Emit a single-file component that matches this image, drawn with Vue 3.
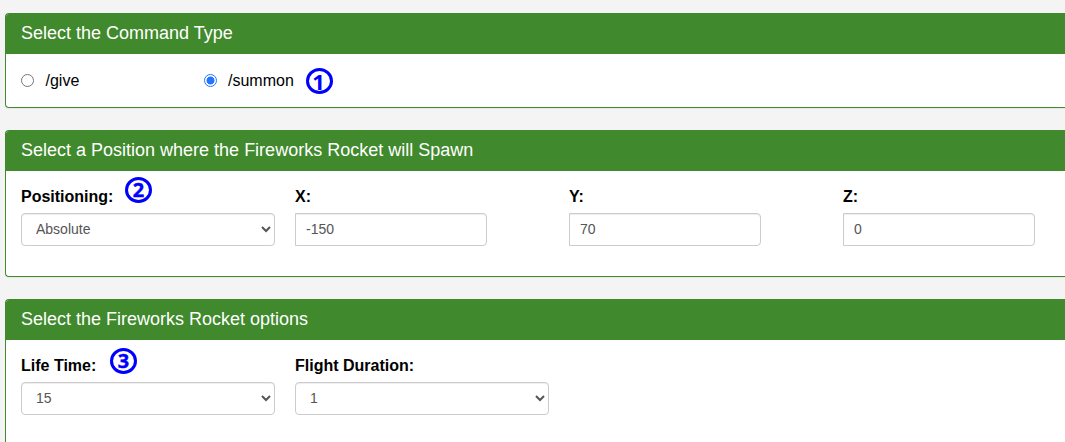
<template>
  <div class="page">
    <section class="panel">
      <h3 class="panel-heading">Select the Command Type</h3>
      <div class="panel-body command-body">
        <label v-for="type in commandTypes" :key="type" class="radio-option">
          <input v-model="command" type="radio" name="command" :value="type" />
          <span>{{ type }}</span>
          <StepBadge v-if="type === '/summon'" class="badge-command" :step="1" />
        </label>
      </div>
    </section>

    <section class="panel">
      <h3 class="panel-heading">Select a Position where the Fireworks Rocket will Spawn</h3>
      <div class="panel-body position-body">
        <div class="field">
          <label for="positioning">Positioning:</label>
          <StepBadge class="badge-position" :step="2" />
          <select id="positioning" v-model="positioning" class="form-control">
            <option>Absolute</option>
            <option>Relative</option>
          </select>
        </div>
        <div v-for="axis in axes" :key="axis.name" class="field">
          <label :for="axis.name">{{ axis.name }}:</label>
          <input :id="axis.name" v-model="axis.value" type="text" class="form-control coordinate" />
        </div>
      </div>
    </section>

    <section class="panel">
      <h3 class="panel-heading">Select the Fireworks Rocket options</h3>
      <div class="panel-body options-body">
        <div class="field">
          <label for="lifetime">Life Time:</label>
          <StepBadge class="badge-lifetime" :step="3" />
          <select id="lifetime" v-model="lifeTime" class="form-control">
            <option v-for="n in 30" :key="n" :value="n">{{ n }}</option>
          </select>
        </div>
        <div class="field">
          <label for="flight">Flight Duration:</label>
          <select id="flight" v-model="flight" class="form-control">
            <option v-for="n in 3" :key="n" :value="n">{{ n }}</option>
          </select>
        </div>
      </div>
    </section>
  </div>
</template>

<script setup>
import { h, reactive, ref } from 'vue'

const StepBadge = (props) => h('span', { class: ['step-badge', `step-${props.step}`] }, props.step)
StepBadge.props = ['step']

const commandTypes = ['/give', '/summon']
const command = ref('/summon')
const positioning = ref('Absolute')
const axes = reactive([
  { name: 'X', value: '-150' },
  { name: 'Y', value: '70' },
  { name: 'Z', value: '0' }
])
const lifeTime = ref(15)
const flight = ref(1)
</script>

<style>
body {
  margin: 0;
  background: #f4f4f4;
}

.step-badge {
  position: absolute;
  box-sizing: border-box;
  width: 27px;
  height: 26px;
  border: 3px solid #00f;
  border-radius: 50%;
  color: #00f;
  font: bold 20px/20px "Noto Sans", sans-serif;
  text-align: center;
  -webkit-text-stroke: 0.4px #00f;
}

.step-badge.step-1 {
  font-size: 22px;
  text-indent: -2px;
  -webkit-text-stroke: 0;
}
</style>

<style scoped>
.page {
  box-sizing: border-box;
  height: 442px;
  padding: 13px 0 0 5px;
  overflow: hidden;
  font-family: "Liberation Sans", Arial, sans-serif;
  font-size: 16px;
  line-height: 24px;
  color: #000;
}

.panel {
  box-sizing: border-box;
  margin-bottom: 22px;
  background: #fff;
  border: 1px solid #40892d;
  border-right: 0;
  border-radius: 4px 0 0 4px;
  box-shadow: 0 1px 1px rgba(0, 0, 0, 0.05);
}

.panel-heading {
  box-sizing: border-box;
  height: 40px;
  margin: 0;
  padding: 9px 15px;
  background: #40892d;
  border-radius: 3px 0 0 0;
  color: #fff;
  font-size: 18px;
  font-weight: normal;
  line-height: 20px;
}

.panel-body {
  box-sizing: border-box;
  display: flex;
  padding: 14px 0 15px 15px;
}

.command-body {
  height: 53px;
}

.position-body {
  height: 105px;
}

.options-body {
  height: 120px;
}

.radio-option {
  position: relative;
  display: flex;
  align-items: center;
  width: 183px;
  height: 25px;
}

.radio-option input {
  appearance: none;
  box-sizing: border-box;
  width: 13px;
  height: 13px;
  margin: 0 11.5px 0 0;
  border: 1px solid #767676;
  border-radius: 50%;
  background: #fff;
}

.radio-option input:checked {
  border-color: #2374ff;
  background: radial-gradient(circle, #2374ff 3.7px, #fff 4.3px);
}

.radio-option + .radio-option input {
  margin-right: 11px;
}

.field {
  position: relative;
  flex: 0 0 254px;
  margin-right: 20px;
}

.field:nth-child(4) {
  flex-basis: 192px;
  margin-right: 0;
}

.field label {
  display: block;
  height: 28px;
  line-height: 23px;
  font-weight: bold;
}

.form-control {
  box-sizing: border-box;
  display: block;
  width: 254px;
  height: 33px;
  padding: 6px 10px;
  border: 1px solid #ccc;
  border-radius: 4px;
  background-color: #fff;
  box-shadow: inset 0 1px 1px rgba(0, 0, 0, 0.075);
  color: #555;
  font-family: inherit;
  font-size: 14px;
  line-height: 20px;
}

select.form-control {
  padding: 5px 2px 6px 10px;
}

input.coordinate {
  width: 192px;
  padding: 5px 10px 7px;
  border-radius: 0 4px 4px 0;
}

.badge-command {
  top: 0;
  left: 102px;
}

.badge-position {
  top: -8px;
  left: 104px;
}

.badge-lifetime {
  top: -6px;
  left: 89px;
}
</style>
